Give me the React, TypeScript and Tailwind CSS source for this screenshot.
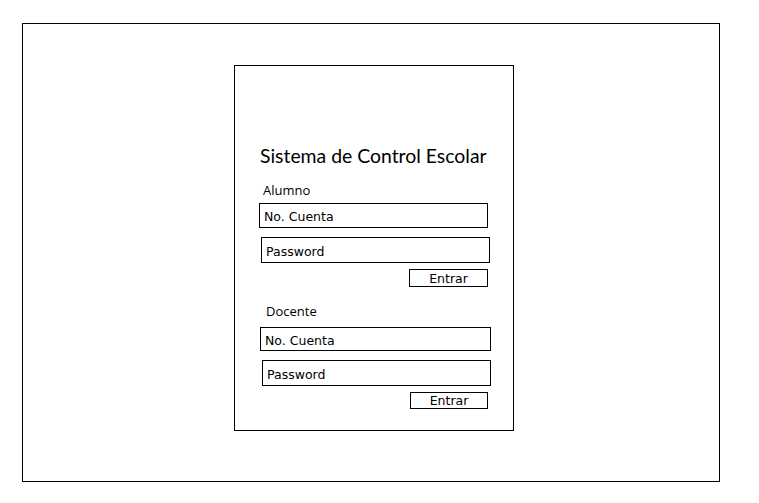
const Field = ({ label, className }: { label: string; className: string }) => (
  <div
    className={`flex items-center border border-black bg-white pl-[4px] pt-[4px] text-[12.5px] text-black ${className}`}
    style={{ fontFamily: '"DejaVu Sans", sans-serif' }}
  >
    {label}
  </div>
);

const Entrar = ({ className }: { className: string }) => (
  <div
    className={`flex items-center justify-center border border-black bg-white pt-[2px] text-[12.5px] text-black ${className}`}
    style={{ fontFamily: '"DejaVu Sans", sans-serif' }}
  >
    Entrar
  </div>
);

export default function App() {
  return (
    <div className="min-h-[503px] w-[759px] bg-white pl-[22px] pt-[23px]">
      <div className="box-border h-[459px] w-[698px] border border-black pl-[211px] pt-[41px]">
        {/* login panel */}
        <div
          className="box-border flex h-[366px] w-[280px] flex-col items-start border border-black"
          style={{ fontFamily: '"Open Sans", sans-serif' }}
        >
          <h1
            className="ml-[25px] mt-[78px] text-[19.4px] leading-[24px] text-black"
            style={{ fontFamily: 'Lato, sans-serif' }}
          >
            Sistema de Control Escolar
          </h1>
          <p className="ml-[28px] mt-[14px] text-[13px] leading-[16px] text-black">Alumno</p>
          <Field label="No. Cuenta" className="ml-[24px] mt-[5px] h-[25px] w-[229px]" />
          <Field label="Password" className="ml-[26px] mt-[9px] h-[26px] w-[229px]" />
          <Entrar className="ml-[174px] mt-[6px] h-[18px] w-[79px]" />
          <p className="ml-[31px] mt-[16px] text-[13px] leading-[16px] text-black">Docente</p>
          <Field label="No. Cuenta" className="ml-[25px] mt-[8px] h-[24px] w-[231px]" />
          <Field label="Password" className="ml-[27px] mt-[9px] h-[26px] w-[229px]" />
          <Entrar className="ml-[175px] mt-[6px] h-[17px] w-[78px]" />
        </div>
      </div>
    </div>
  );
}
